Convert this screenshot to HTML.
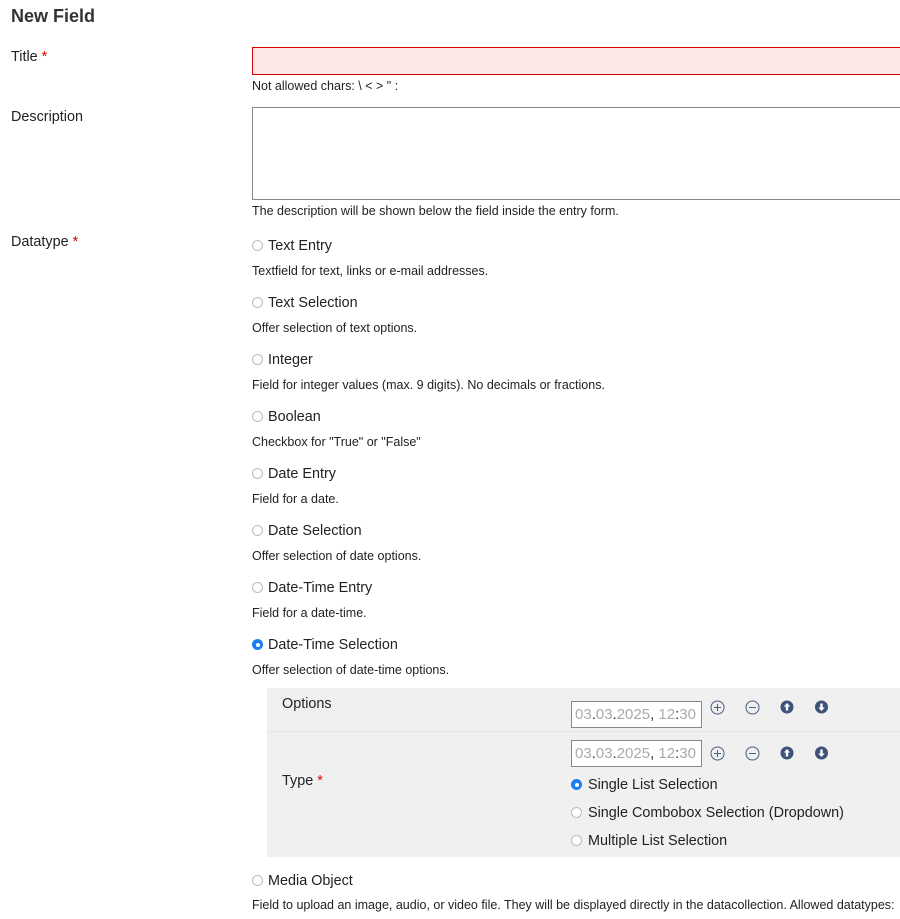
<!DOCTYPE html>
<html><head><meta charset="utf-8"><style>
body{margin:0;width:900px;height:919px;overflow:hidden;background:#fff;font-family:"Liberation Sans","DejaVu Sans",sans-serif;color:#222;position:relative}
.a{position:absolute;white-space:nowrap}
.h{font-size:18px;font-weight:bold;color:#333}
.l{font-size:14.4px;margin-top:1px}
.s{font-size:12.5px;margin-top:1px}
.req{color:#d00}
.r{position:absolute;width:9px;height:9px;border:1px solid #bbb;border-radius:50%;background:#fff}
.r.on{border:none;width:11px;height:11px;background:#1a7ef0}
.r.on:after{content:"";position:absolute;left:3.5px;top:3.5px;width:4px;height:4px;border-radius:50%;background:#fff}
.di{position:absolute;width:126px;height:25px;border:1px solid #888;background:#fff;font-size:15px;color:#aaa;line-height:25px;padding-left:3px;box-sizing:content-box}
.di b{font-weight:normal;color:#333}
</style></head><body>
<div class="a h" style="left:11px;top:6px">New Field</div>
<div class="a l" style="left:11px;top:48px">Title <span class="req">*</span></div>
<div class="a" style="left:252px;top:47px;width:660px;height:26px;border:1px solid #d00;background:#fde8e8"></div>
<div class="a s" style="left:252px;top:78px">Not allowed chars: \ &lt; &gt; " :</div>
<div class="a l" style="left:11px;top:108px">Description</div>
<div class="a" style="left:252px;top:107px;width:660px;height:91px;border:1px solid #888"></div>
<div class="a s" style="left:252px;top:203px">The description will be shown below the field inside the entry form.</div>
<div class="a l" style="left:11px;top:233px">Datatype <span class="req">*</span></div>

<div class="r" style="left:252px;top:240px"></div><div class="a l" style="left:268px;top:237px">Text Entry</div>
<div class="a s" style="left:252px;top:263px">Textfield for text, links or e-mail addresses.</div>
<div class="r" style="left:252px;top:297px"></div><div class="a l" style="left:268px;top:294px">Text Selection</div>
<div class="a s" style="left:252px;top:320px">Offer selection of text options.</div>
<div class="r" style="left:252px;top:354px"></div><div class="a l" style="left:268px;top:351px">Integer</div>
<div class="a s" style="left:252px;top:377px">Field for integer values (max. 9 digits). No decimals or fractions.</div>
<div class="r" style="left:252px;top:411px"></div><div class="a l" style="left:268px;top:408px">Boolean</div>
<div class="a s" style="left:252px;top:434px">Checkbox for "True" or "False"</div>
<div class="r" style="left:252px;top:468px"></div><div class="a l" style="left:268px;top:465px">Date Entry</div>
<div class="a s" style="left:252px;top:491px">Field for a date.</div>
<div class="r" style="left:252px;top:525px"></div><div class="a l" style="left:268px;top:522px">Date Selection</div>
<div class="a s" style="left:252px;top:548px">Offer selection of date options.</div>
<div class="r" style="left:252px;top:582px"></div><div class="a l" style="left:268px;top:579px">Date-Time Entry</div>
<div class="a s" style="left:252px;top:605px">Field for a date-time.</div>
<div class="r on" style="left:252px;top:639px"></div><div class="a l" style="left:268px;top:636px">Date-Time Selection</div>
<div class="a s" style="left:252px;top:662px">Offer selection of date-time options.</div>

<div class="a" style="left:267px;top:688px;width:633px;height:169px;background:#f0f0f0"></div>
<div class="a" style="left:267px;top:731px;width:633px;height:1px;background:#e6e6e6"></div>
<div class="a l" style="left:282px;top:695px">Options</div>
<div class="di" style="left:571px;top:701px">03<b>.</b>03<b>.</b>2025<b>,</b> 12<b>:</b>30</div>
<div class="di" style="left:571px;top:740px">03<b>.</b>03<b>.</b>2025<b>,</b> 12<b>:</b>30</div>
<svg class="a" style="left:700px;top:695px" width="140" height="75">
<g fill="none" stroke="#4a5e80" stroke-width="1">
<circle cx="17.5" cy="12.5" r="6.5"/><path d="M14 12.5h7M17.5 9v7"/>
<circle cx="52.5" cy="12.5" r="6.5"/><path d="M49 12.5h7"/>
<circle cx="17.5" cy="58.5" r="6.5"/><path d="M14 58.5h7M17.5 55v7"/>
<circle cx="52.5" cy="58.5" r="6.5"/><path d="M49 58.5h7"/>
</g>
<g fill="#3d5278">
<circle cx="87" cy="12" r="6.5"/><circle cx="121.5" cy="12" r="6.5"/>
<circle cx="87" cy="58" r="6.5"/><circle cx="121.5" cy="58" r="6.5"/>
</g>
<g fill="#fff">
<path d="M87 8l3.2 3.5h-2v4h-2.4v-4h-2z"/><path d="M121.5 16l3.2-3.5h-2v-4h-2.4v4h-2z"/>
<path d="M87 54l3.2 3.5h-2v4h-2.4v-4h-2z"/><path d="M121.5 62l3.2-3.5h-2v-4h-2.4v4h-2z"/>
</g></svg>
<div class="a l" style="left:282px;top:772px">Type <span class="req">*</span></div>
<div class="r on" style="left:571px;top:779px"></div><div class="a l" style="left:588px;top:776px">Single List Selection</div>
<div class="r" style="left:571px;top:807px"></div><div class="a l" style="left:588px;top:804px">Single Combobox Selection (Dropdown)</div>
<div class="r" style="left:571px;top:835px"></div><div class="a l" style="left:588px;top:832px">Multiple List Selection</div>

<div class="r" style="left:252px;top:875px"></div><div class="a l" style="left:268px;top:872px">Media Object</div>
<div class="a s" style="left:252px;top:897px">Field to upload an image, audio, or video file. They will be displayed directly in the datacollection. Allowed datatypes:</div>
</body></html>
